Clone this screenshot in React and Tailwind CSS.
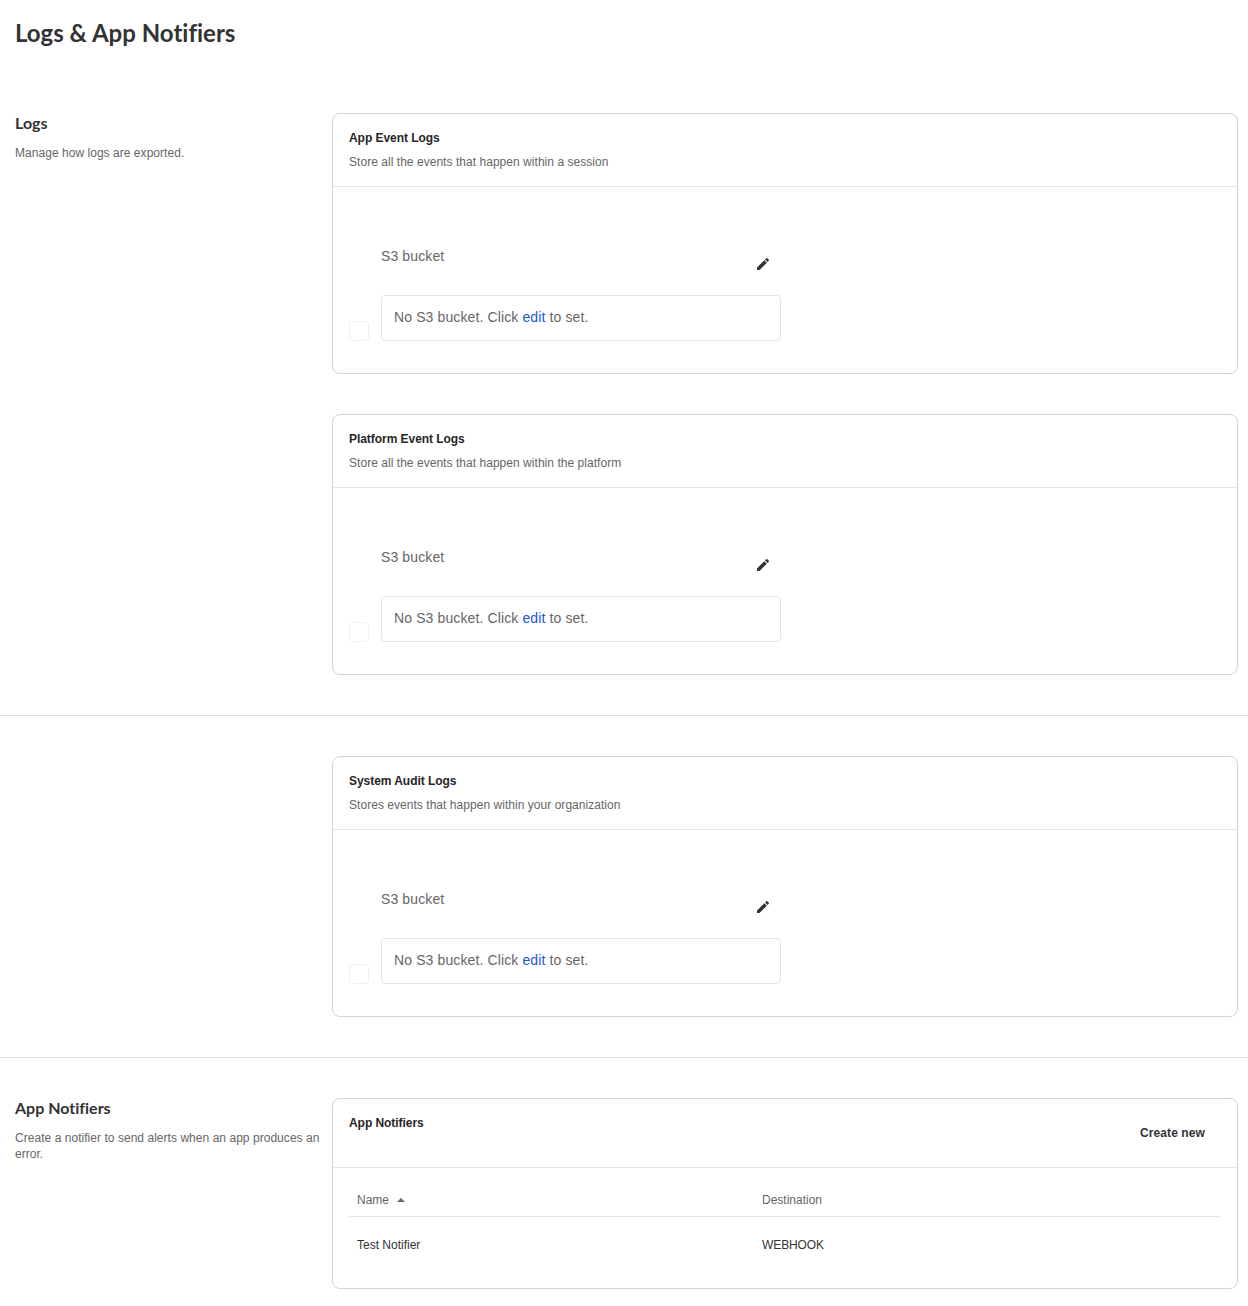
import React from 'react'

const logCards = [
  { title: 'App Event Logs', description: 'Store all the events that happen within a session' },
  { title: 'Platform Event Logs', description: 'Store all the events that happen within the platform' },
]

function PencilIcon() {
  return (
    <svg className="w-4 h-4 text-[#333333]" viewBox="0 0 24 24" fill="currentColor">
      <path d="M3 17.25V21h3.75L17.81 9.94l-3.75-3.75L3 17.25zM20.71 7.04c.39-.39.39-1.02 0-1.41l-2.34-2.34c-.39-.39-1.02-.39-1.41 0l-1.83 1.83 3.75 3.75 1.83-1.83z" />
    </svg>
  )
}

function LogCard({ title, description }) {
  return (
    <div className="border border-[#d4d4d4] rounded-lg">
      <div className="px-4 pt-4 pb-4 border-b border-[#e5e5e5]">
        <h3 className="text-xs leading-4 font-bold text-[#262626] tracking-[-0.05px]">{title}</h3>
        <p className="text-xs leading-4 mt-2 text-[#666666] tracking-[0.04px]">{description}</p>
      </div>
      <div className="flex px-4 pt-[60px] pb-8">
        <div className="self-end w-5 h-5 mr-3 border border-[#f0f0f0] rounded" />
        <div className="w-[400px]">
          <div className="flex justify-between h-12 pr-[10px]">
            <span className="text-sm leading-[18px] text-[#666666] tracking-[0.12px]">S3 bucket</span>
            <div className="mt-[9px]">
              <PencilIcon />
            </div>
          </div>
          <div className="h-[46px] border border-[#e5e5e5] rounded px-3 pt-[12px] text-sm leading-[18px] text-[#666666] tracking-[0.12px]">
            No S3 bucket. Click <a className="text-[#1a56db]">edit</a> to set.
          </div>
        </div>
      </div>
    </div>
  )
}

function SectionIntro({ title, children }) {
  return (
    <div className="w-[332px] shrink-0 pl-[15px] pr-[11px]">
      {title && <h2 className="text-base leading-5 font-bold text-[#333333] font-['Lato',sans-serif] [font-variant-ligatures:none]">{title}</h2>}
      {children && <p className="text-xs leading-4 mt-3 text-[#666666] tracking-[0.04px]">{children}</p>}
    </div>
  )
}

export default function App() {
  return (
    <div className="w-[1248px] min-h-[1306px] bg-white font-['Liberation_Sans',Arial,sans-serif]">
      <div className="h-[73px] px-[15px] pt-[17px]">
        <h1 className="text-2xl leading-8 font-bold text-[#333333] font-['Lato',sans-serif] [font-variant-ligatures:none]">Logs &amp; App Notifiers</h1>
      </div>

      <section className="flex py-10 border-b border-[#e0e0e0]">
        <SectionIntro title="Logs">Manage how logs are exported.</SectionIntro>
        <div className="w-[906px] flex flex-col gap-10">
          {logCards.map((card) => (
            <LogCard key={card.title} title={card.title} description={card.description} />
          ))}
        </div>
      </section>

      <section className="flex py-10 border-b border-[#e0e0e0]">
        <SectionIntro />
        <div className="w-[906px]">
          <LogCard title="System Audit Logs" description="Stores events that happen within your organization" />
        </div>
      </section>

      <section className="flex pt-10">
        <SectionIntro title="App Notifiers">Create a notifier to send alerts when an app produces an error.</SectionIntro>
        <div className="w-[906px] h-[191px] border border-[#d4d4d4] rounded-lg">
          <div className="flex justify-between h-[69px] pl-4 pr-8 border-b border-[#e5e5e5]">
            <h3 className="mt-4 text-xs leading-4 font-bold text-[#262626] tracking-[-0.05px]">App Notifiers</h3>
            <button className="mt-[26px] h-4 text-xs leading-4 font-bold text-[#333333] tracking-[0.1px]">Create new</button>
          </div>
          <div className="mx-4 text-xs leading-4">
            <div className="flex h-[49px] pt-6 border-b border-[#e5e5e5] text-[#666666]">
              <div className="w-[405px] pl-2 flex items-center h-4">
                Name
                <svg className="ml-2 w-2 h-1" viewBox="0 0 8 4" fill="#666666">
                  <path d="M0 4 L4 0 L8 4 Z" />
                </svg>
              </div>
              <div className="pl-2">Destination</div>
            </div>
            <div className="flex pt-5 text-[#333333]">
              <div className="w-[405px] pl-2">Test Notifier</div>
              <div className="pl-2 tracking-[-0.1px]">WEBHOOK</div>
            </div>
          </div>
        </div>
      </section>
    </div>
  )
}
